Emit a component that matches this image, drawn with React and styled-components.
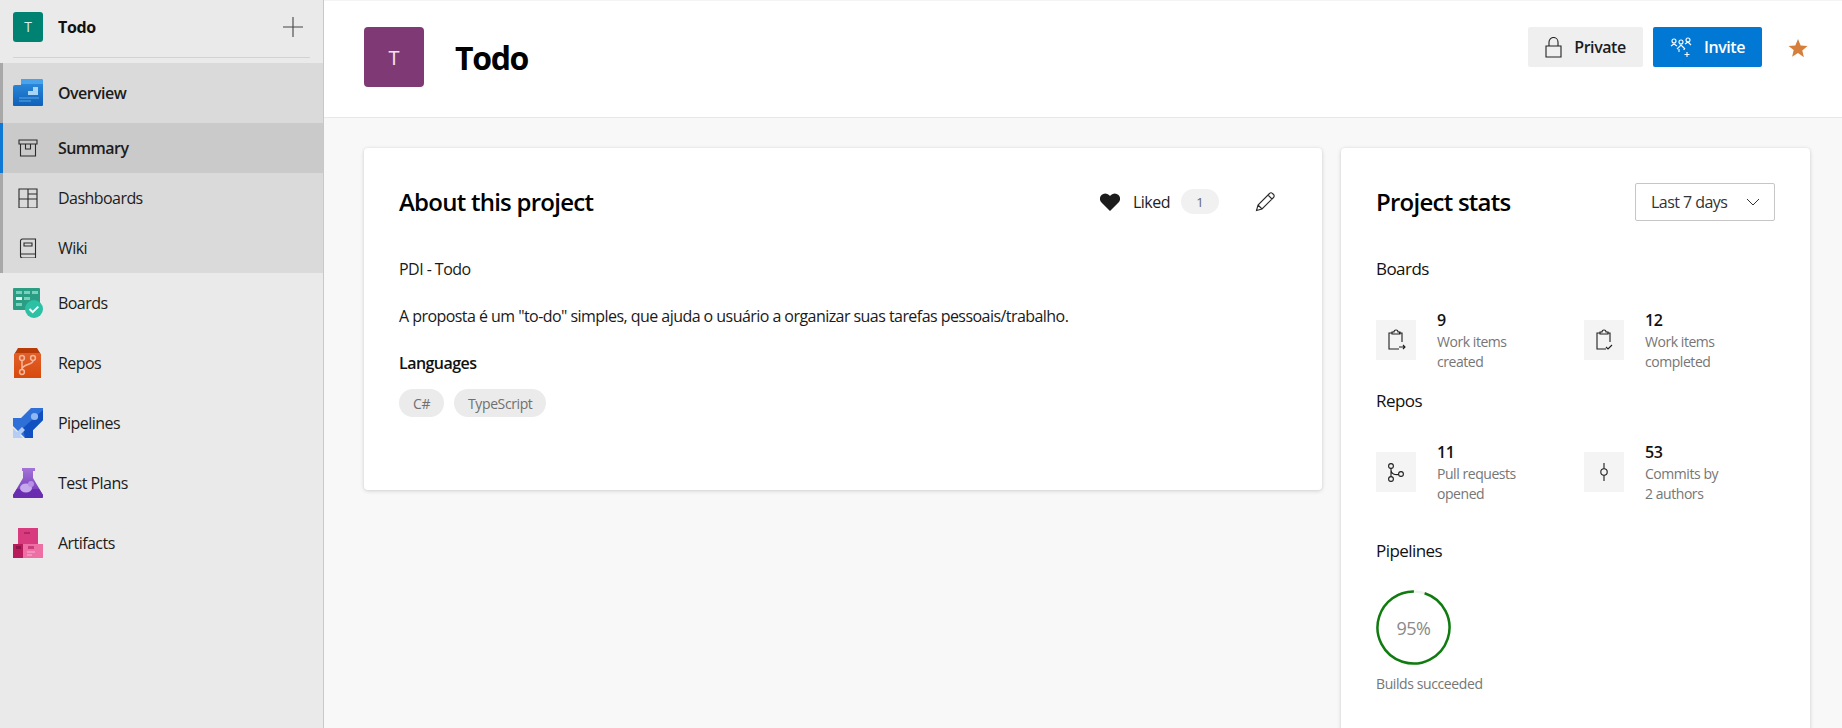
import React from "react";
import styled, { createGlobalStyle } from "styled-components";

const Global = createGlobalStyle`
  html, body { margin: 0; padding: 0; height: 728px; overflow: hidden; background: #f8f8f8; }
  body { font-family: "Open Sans", "Noto Sans", "Liberation Sans", sans-serif; color: #111; }
  * { box-sizing: border-box; }
`;

const Page = styled.div`display: flex; width: 1842px; height: 728px; overflow: hidden;`;
const Sidebar = styled.nav`width: 324px; flex: none; height: 100%; background: #eaeaea; border-right: 1px solid #c8c8c8;`;
const ProjectRow = styled.div`height: 58px; margin: 0 13px; padding-bottom: 4px; display: flex; align-items: center; border-bottom: 1px solid #d2d2d2;`;
const SmallTile = styled.div`width: 30px; height: 30px; border-radius: 3px; background: #008272; color: #d8f0ea; font-size: 14px; display: flex; align-items: center; justify-content: center;`;
const ProjectName = styled.div`margin-left: 15px; font-size: 16px; font-weight: 700; letter-spacing: -0.35px; flex: 1;`;
const Group = styled.div`margin-top: 5px; background: #dadada;`;
const Item = styled.div`
  display: flex; align-items: center;
  height: ${p => p.$h || 60}px;
  padding-left: ${p => (p.$inGroup ? 10 : 13)}px;
  border-left: ${p => (p.$inGroup ? `3px solid ${p.$active ? "#0f78d4" : "#a8a8a8"}` : "0")};
  background: ${p => (p.$active ? "#cacaca" : "transparent")};
`;
const IconSlot = styled.div`width: 30px; height: 30px; flex: none; display: flex; align-items: center; justify-content: center;`;
const ItemLabel = styled.span`margin-left: 15px; font-size: 16px; letter-spacing: -0.55px; color: #1c1c1c; font-weight: ${p => (p.$bold ? 600 : 400)};`;

const Main = styled.main`flex: 1; min-width: 0; display: flex; flex-direction: column; background: #f8f8f8;`;
const Header = styled.header`height: 118px; flex: none; background: #fff; border-top: 1px solid #f4f4f4; border-bottom: 1px solid #e8e8e8; display: flex; align-items: flex-start; padding: 26px 32px 0 40px;`;
const BigTile = styled.div`width: 60px; height: 60px; border-radius: 4px; background: #7f3a75; color: #f6e6f3; font-size: 20px; display: flex; align-items: center; justify-content: center;`;
const Title = styled.h1`margin: 0 0 0 31px; height: 60px; line-height: 62px; font-size: 32px; font-weight: 700; letter-spacing: -1.35px; color: #000; flex: 1;`;
const Btn = styled.div`
  height: 40px; width: ${p => p.$w}px; margin-left: ${p => p.$ml || 0}px; display: flex; align-items: center; justify-content: center; gap: 12px;
  font-size: 16px; font-weight: 600; letter-spacing: -0.45px; border-radius: 2px;
  background: ${p => (p.$primary ? "#0078d4" : "#efefef")}; color: ${p => (p.$primary ? "#fff" : "#1c1c1c")};
`;
const Star = styled.div`margin: 9px 0 0 24px; width: 24px; height: 24px; color: #d67f3c;`;

const Content = styled.div`flex: 1; display: flex; align-items: flex-start; gap: 19px; padding: 30px 32px 0 40px;`;
const Card = styled.section`
  background: #fff; border-radius: 4px; box-shadow: 0 1px 4px rgba(0,0,0,0.16), 0 0 2px rgba(0,0,0,0.05);
  padding: 35px; width: ${p => p.$w}px; height: ${p => p.$h}px; flex: none;
`;
const CardHead = styled.div`display: flex; align-items: center; height: 37px;`;
const CardTitle = styled.h2`margin: 0; flex: 1; font-size: 24px; font-weight: 600; letter-spacing: -0.75px; color: #000;`;
const LikedText = styled.span`margin-left: 13px; font-size: 16px; letter-spacing: -0.5px; color: #222;`;
const Count = styled.span`margin-left: 11px; width: 38px; height: 25px; border-radius: 13px; background: #f1f1f1; color: #666; font-size: 13px; display: flex; align-items: center; justify-content: center;`;
const PencilWrap = styled.div`margin: 0 12px 0 36px; width: 20px; height: 20px;`;
const Para = styled.p`margin: ${p => p.$mt}px 0 0; height: 24px; line-height: 24px; font-size: 16px; letter-spacing: -0.55px; color: #1a1a1a;`;
const SubHead = styled.h3`margin: 23px 0 0; height: 24px; line-height: 24px; font-size: 16px; font-weight: 600; letter-spacing: -0.55px; color: #111;`;
const Chips = styled.div`display: flex; gap: 10px; margin-top: 14px;`;
const Chip = styled.span`height: 28px; padding: 0 14px; border-radius: 14px; background: #ebebeb; color: #707070; font-size: 14px; letter-spacing: -0.4px; display: flex; align-items: center;`;

const Select = styled.div`width: 140px; height: 38px; margin-right: 0; border: 1px solid #c6c6c6; border-radius: 2px; display: flex; align-items: center; justify-content: space-between; padding: 0 14px 0 15px; font-size: 16px; letter-spacing: -0.55px; color: #333;`;
const SectionTitle = styled.h4`margin: ${p => p.$mt}px 0 0; height: 24px; line-height: 24px; font-size: 17px; font-weight: 400; letter-spacing: -0.55px; color: #111;`;
const StatGrid = styled.div`display: grid; grid-template-columns: 208px 1fr; margin-top: 26px;`;
const Stat = styled.div`display: flex; align-items: center; height: 65px;`;
const StatTile = styled.div`width: 40px; height: 40px; flex: none; background: #f4f4f4; display: flex; align-items: center; justify-content: center;`;
const StatText = styled.div`margin-left: 21px;`;
const StatNum = styled.div`font-size: 16px; font-weight: 600; line-height: 24px; letter-spacing: -0.3px; color: #111;`;
const StatLabel = styled.div`font-size: 14px; line-height: 20px; letter-spacing: -0.45px; color: #767676;`;
const Ring = styled.div`position: relative; width: 75px; height: 75px; margin-top: 27px;`;
const RingText = styled.span`position: absolute; inset: 0; display: flex; align-items: center; justify-content: center; font-size: 18px; letter-spacing: -0.5px; color: #8a8a8a;`;
const RingCaption = styled.div`margin-top: 9px; font-size: 14px; line-height: 20px; letter-spacing: -0.4px; color: #767676;`;

const Line = ({ size = 20, children, vb = 20 }) => (
  <svg width={size} height={size} viewBox={`0 0 ${vb} ${vb}`} fill="none" stroke="#2a2a2a" strokeWidth="1.1">{children}</svg>
);

const Overview = () => (
  <svg width="30" height="30" viewBox="0 0 30 30">
    <defs><linearGradient id="ov" x1="0" y1="0" x2="0" y2="1"><stop offset="0" stopColor="#2f8fe0" /><stop offset="1" stopColor="#0f60b8" /></linearGradient></defs>
    <path d="M8 1h20a2 2 0 0 1 2 2v24a1 1 0 0 1-1 1H1a1 1 0 0 1-1-1V9a2 2 0 0 1 2-2h6z" fill="url(#ov)" />
    <path d="M8 1h20a2 2 0 0 1 2 2v3H8z" fill="#4aa3ea" />
    <path d="M10 17h5v-4h5V9h5v8z" fill="#a8d4f5" />
    <path d="M6 20h20M6 23h12" stroke="#5aa6e4" strokeWidth="1.2" />
  </svg>
);
const Boards = () => (
  <svg width="30" height="30" viewBox="0 0 30 30">
    <path d="M1 0h25a1 1 0 0 1 1 1v21H1a1 1 0 0 1-1-1V1a1 1 0 0 1 1-1z" fill="#2a9d83" />
    <path d="M3 3h6v3H3zM11 3h6v3h-6zM19 3h6v3h-6z" fill="#7ad0bc" />
    <path d="M3 9h6v3H3z" fill="#e4f5f0" /><path d="M11 9h6v3h-6zM3 15h6v3H3z" fill="#7ad0bc" />
    <circle cx="21" cy="21" r="9" fill="#2cc0a4" />
    <path d="M16.5 21l3.2 3.2 5.6-5.6" stroke="#fff" strokeWidth="2" fill="none" />
  </svg>
);
const Repos = () => (
  <svg width="30" height="30" viewBox="0 0 30 30">
    <defs><linearGradient id="rp" x1="0" y1="0" x2="0" y2="1"><stop offset="0" stopColor="#e2622f" /><stop offset="1" stopColor="#d84a0c" /></linearGradient></defs>
    <path d="M5 2h19l4 4v24H1V6z" fill="url(#rp)" />
    <path d="M5 0h19l3 5H2z" fill="#b83c08" />
    <g stroke="#f7b79a" strokeWidth="1.5" fill="none">
      <circle cx="9" cy="10" r="2.4" /><circle cx="20" cy="10" r="2.4" /><circle cx="9" cy="24" r="2.4" />
      <path d="M9 12.5v9M20 12.5c0 5-11 3-11 9" />
    </g>
  </svg>
);
const Pipelines = () => (
  <svg width="30" height="30" viewBox="0 0 30 30">
    <path d="M0 10h8L18 0h12v12L20 22v8H12L0 18z" fill="#2f6fd8" />
    <path d="M10 20L30 2v10L20 22v8h-8z" fill="#1050c0" />
    <circle cx="21.5" cy="8.5" r="3.6" fill="#8fb8f0" />
    <path d="M0 20l4 4 5-5 3 3-5 5 3 3H0z" fill="#b4cdf5" />
  </svg>
);
const TestPlans = () => (
  <svg width="30" height="30" viewBox="0 0 30 30">
    <defs><linearGradient id="tp" x1="0" y1="0" x2="0" y2="1"><stop offset="0" stopColor="#a474d8" /><stop offset="1" stopColor="#6a2fb4" /></linearGradient></defs>
    <path d="M9 0h13v3h-2v7l10 17a2 2 0 0 1-2 3H2a2 2 0 0 1-2-3l10-17V3H9z" fill="url(#tp)" />
    <path d="M4 21h22l4 6a2 2 0 0 1-2 3H2a2 2 0 0 1-2-3z" fill="#6a2db0" />
    <ellipse cx="13" cy="20" rx="6" ry="4.5" fill="#c6a8ec" />
    <circle cx="18" cy="16" r="3" fill="#b690e4" />
  </svg>
);
const Artifacts = () => (
  <svg width="30" height="30" viewBox="0 0 30 30">
    <path d="M5 0h20v16H5z" fill="#d83c7e" />
    <path d="M11 4h6v2h-6z" fill="#b02864" />
    <path d="M0 16h10v14H0z" fill="#b81a5c" />
    <path d="M10 16h20v14H10z" fill="#ee6fa4" />
    <path d="M3 18h5v3H3z" fill="#8e1448" /><path d="M15 18h6v3h-6z" fill="#c83c7c" />
    <path d="M14 24h8M14 27h5" stroke="#f7b4d0" strokeWidth="1" />
  </svg>
);

const SummaryIcon = () => (
  <Line><path d="M1 2h18v4H1zM2.5 6v12h15V6M7.5 6v5h5V6" /></Line>
);
const DashIcon = () => (
  <Line><path d="M1 1h18v19H1zM1 11h18M10 1v19M10 6h9M10 15h0" /></Line>
);
const WikiIcon = () => (
  <Line><path d="M2.5 3a2 2 0 0 1 2-2h13v19h-13a2 2 0 0 1-2-2zM2.5 16h15M6 5h8v3H6z" /></Line>
);

const StatIcon = ({ kind }) => (
  <svg width="20" height="22" viewBox="0 0 20 22" fill="none" stroke="#1e1e1e" strokeWidth="1.1">
    {kind === "created" && <><path d="M13 20H3V4h3M13 4h3v9M6 5V3h2a2 2 0 0 1 4 0h2v2z" /><path d="M13 18h6M17 16l2 2-2 2" /></>}
    {kind === "done" && <><path d="M12 20H3V4h3M14 4h2v9M6 5V3h2a2 2 0 0 1 4 0h2v2z" /><path d="M12 18l2 2 4-4" /></>}
    {kind === "pr" && <><circle cx="5" cy="5" r="2.4" /><circle cx="5" cy="18" r="2.4" /><circle cx="15" cy="13" r="2.4" /><path d="M5 7.5v8M5 9c0 4 4 5 7.6 4.5" /></>}
    {kind === "commit" && <><circle cx="10" cy="11" r="3.2" /><path d="M10 2v5.8M10 14.2V20" /></>}
  </svg>
);

const StatBlock = ({ kind, num, a, b }) => (
  <Stat>
    <StatTile><StatIcon kind={kind} /></StatTile>
    <StatText>
      <StatNum>{num}</StatNum>
      <StatLabel>{a}</StatLabel>
      <StatLabel>{b}</StatLabel>
    </StatText>
  </Stat>
);

const subItems = [
  { label: "Summary", icon: <SummaryIcon />, active: true },
  { label: "Dashboards", icon: <DashIcon /> },
  { label: "Wiki", icon: <WikiIcon /> },
];
const navItems = [
  { label: "Boards", icon: <Boards /> },
  { label: "Repos", icon: <Repos /> },
  { label: "Pipelines", icon: <Pipelines /> },
  { label: "Test Plans", icon: <TestPlans /> },
  { label: "Artifacts", icon: <Artifacts /> },
];

export default function App() {
  return (
    <Page>
      <Global />
      <Sidebar>
        <ProjectRow>
          <SmallTile>T</SmallTile>
          <ProjectName>Todo</ProjectName>
          <svg width="22" height="22" viewBox="0 0 22 22" stroke="#444" strokeWidth="1.1" style={{ marginRight: 6 }}><path d="M11 1v20M1 11h20" /></svg>
        </ProjectRow>
        <Group>
          <Item $inGroup>
            <IconSlot><Overview /></IconSlot>
            <ItemLabel $bold>Overview</ItemLabel>
          </Item>
          {subItems.map(s => (
            <Item key={s.label} $inGroup $h={50} $active={s.active}>
              <IconSlot>{s.icon}</IconSlot>
              <ItemLabel $bold={s.active}>{s.label}</ItemLabel>
            </Item>
          ))}
        </Group>
        {navItems.map(n => (
          <Item key={n.label}>
            <IconSlot>{n.icon}</IconSlot>
            <ItemLabel>{n.label}</ItemLabel>
          </Item>
        ))}
      </Sidebar>
      <Main>
        <Header>
          <BigTile>T</BigTile>
          <Title>Todo</Title>
          <Btn $w={115}>
            <svg width="17" height="21" viewBox="0 0 17 21" fill="none" stroke="#222" strokeWidth="1.1"><path d="M1 9h15v11H1zM4 9V5a4.5 4.5 0 0 1 9 0v4" /></svg>
            Private
          </Btn>
          <Btn $w={109} $ml={10} $primary>
            <svg width="22" height="20" viewBox="0 0 22 20" fill="none" stroke="#fff" strokeWidth="1.1"><circle cx="4" cy="4" r="2" /><circle cx="11" cy="5" r="2" /><circle cx="18" cy="3" r="2" /><path d="M1 9l3-2 3 2M7 12l4-4 4 4M15 7l3-2 3 3M9 12v3M14 12v1M17 15v5M14.5 17.500h5" /></svg>
            Invite
          </Btn>
          <Star>
            <svg width="24" height="24" viewBox="0 0 24 24" fill="currentColor"><path d="M12 3l2.700 6.400 6.800.6-5.200 4.500 1.600 6.700L12 17.100 6.100 20.700l1.600-6.700L2.500 10l6.800-.6z" /></svg>
          </Star>
        </Header>
        <Content>
          <Card $w={958} $h={342}>
            <CardHead>
              <CardTitle>About this project</CardTitle>
              <svg width="20" height="18" viewBox="0 0 20 18" fill="#1c1c1c"><path d="M10 18L1.500 9.500A5.200 5.200 0 0 1 1.500 2 5.400 5.400 0 0 1 9 2l1 1 1-1a5.400 5.400 0 0 1 7.500 0 5.200 5.200 0 0 1 0 7.500z" /></svg>
              <LikedText>Liked</LikedText>
              <Count>1</Count>
              <PencilWrap>
                <Line><path d="M1.500 18.500l1.500-5.500L14.500 1.500a2 2 0 0 1 3 0l1 1a2 2 0 0 1 0 3L7 17zM3 13l4 4M13 3l4 4" /></Line>
              </PencilWrap>
            </CardHead>
            <Para $mt={37}>PDI - Todo</Para>
            <Para $mt={23}>A proposta é um "to-do" simples, que ajuda o usuário a organizar suas tarefas pessoais/trabalho.</Para>
            <SubHead>Languages</SubHead>
            <Chips><Chip>C#</Chip><Chip>TypeScript</Chip></Chips>
          </Card>
          <Card $w={469} $h={640}>
            <CardHead>
              <CardTitle>Project stats</CardTitle>
              <Select>
                Last 7 days
                <svg width="14" height="8" viewBox="0 0 14 8" fill="none" stroke="#333" strokeWidth="1"><path d="M1 1l6 6 6-6" /></svg>
              </Select>
            </CardHead>
            <SectionTitle $mt={37}>Boards</SectionTitle>
            <StatGrid>
              <StatBlock kind="created" num="9" a="Work items" b="created" />
              <StatBlock kind="done" num="12" a="Work items" b="completed" />
            </StatGrid>
            <SectionTitle $mt={17}>Repos</SectionTitle>
            <StatGrid>
              <StatBlock kind="pr" num="11" a="Pull requests" b="opened" />
              <StatBlock kind="commit" num="53" a="Commits by" b="2 authors" />
            </StatGrid>
            <SectionTitle $mt={35}>Pipelines</SectionTitle>
            <Ring>
              <svg width="75" height="75" viewBox="0 0 75 75" fill="none" strokeWidth="2.500">
                <circle cx="37.500" cy="37.500" r="36" stroke="#eef3ee" />
                <circle cx="37.500" cy="37.500" r="36" stroke="#107c10" strokeDasharray={`${2 * Math.PI * 36 * 0.95} ${2 * Math.PI * 36}`} transform="rotate(-72 37.500 37.500)" style={{ transform: "rotate(-72deg)", transformOrigin: "50% 50%" }} />
              </svg>
              <RingText>95%</RingText>
            </Ring>
            <RingCaption>Builds succeeded</RingCaption>
          </Card>
        </Content>
      </Main>
    </Page>
  );
}
